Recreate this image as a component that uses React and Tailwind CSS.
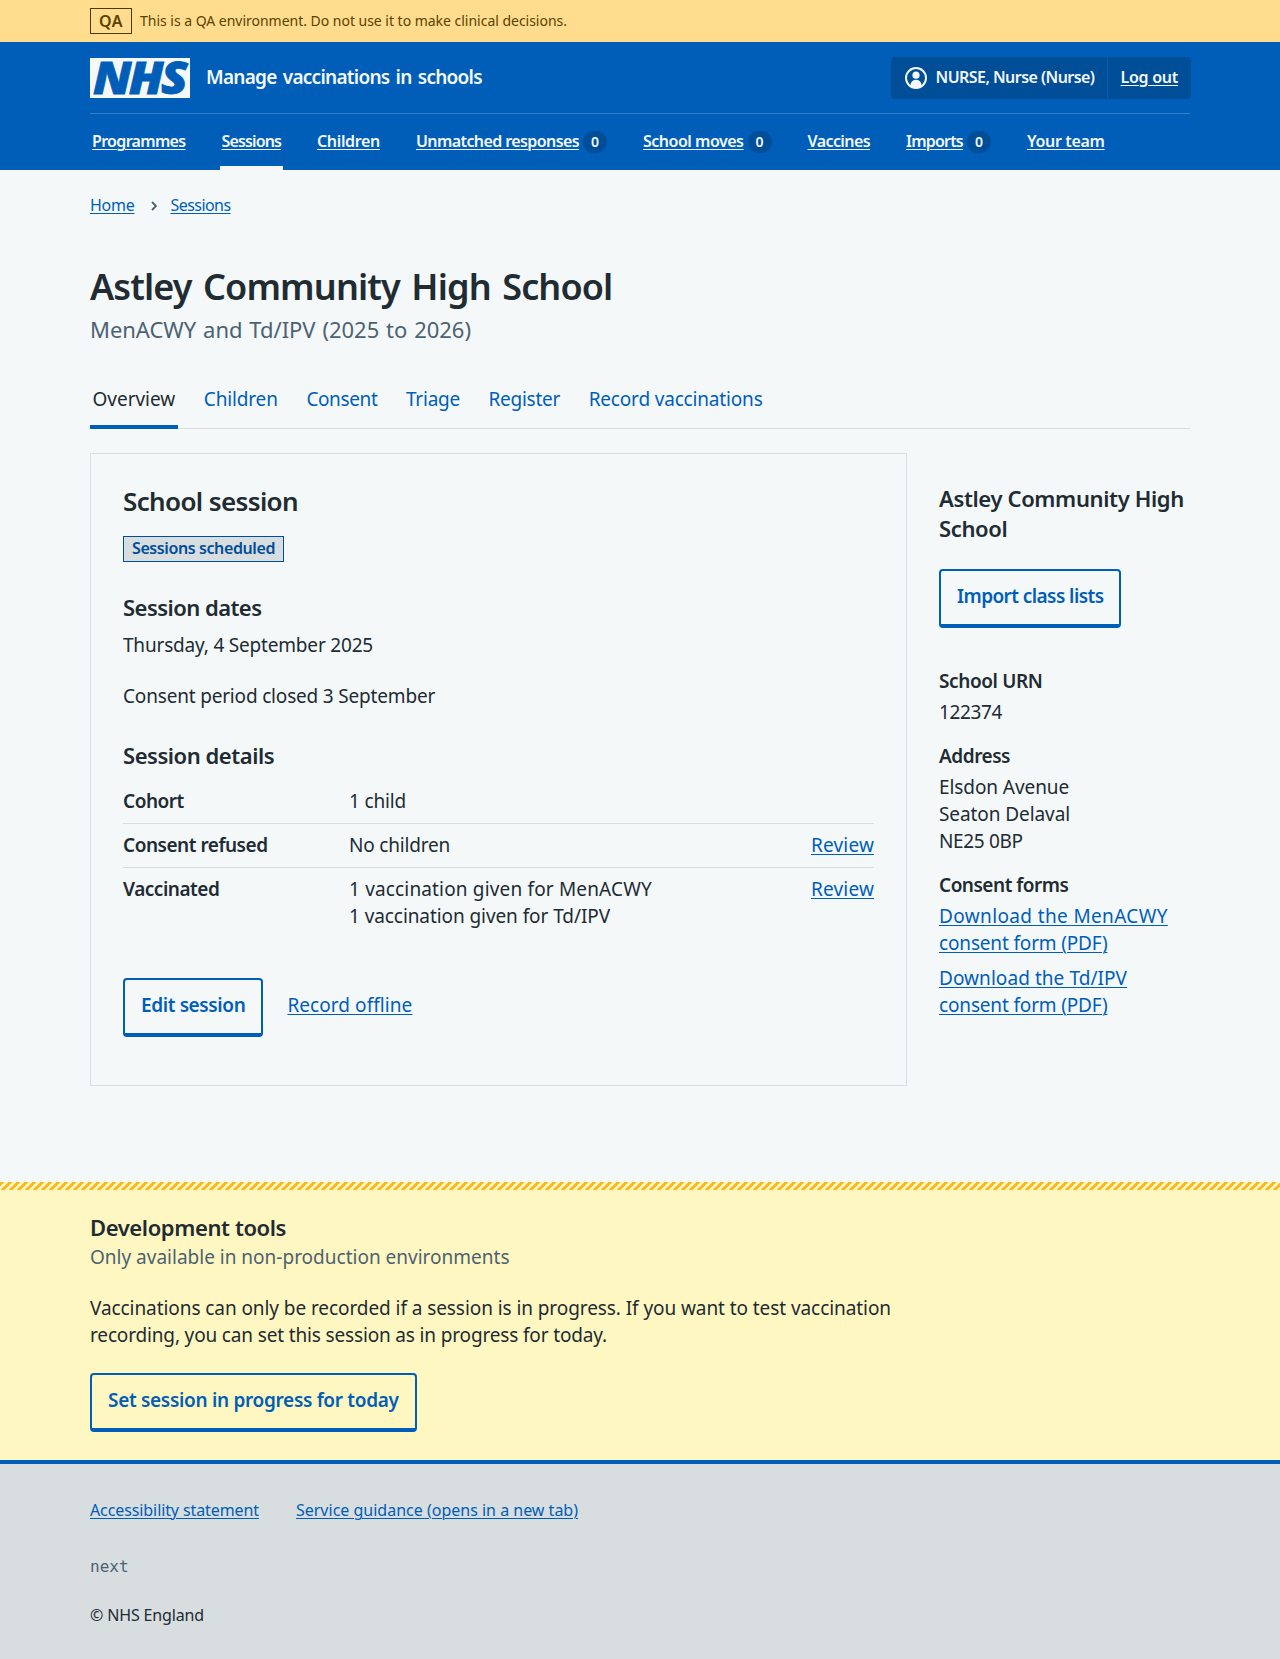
const navItems = [
  { label: "Programmes", fit: "tracking-[-0.68px]" },
  { label: "Sessions", fit: "tracking-[-0.87px]", current: true },
  { label: "Children", fit: "tracking-[-0.34px]" },
  { label: "Unmatched responses", fit: "tracking-[-0.59px]", count: 0 },
  { label: "School moves", fit: "tracking-[-0.49px]", count: 0 },
  { label: "Vaccines", fit: "tracking-[-0.59px]" },
  { label: "Imports", fit: "tracking-[-0.79px]", count: 0 },
  { label: "Your team", fit: "tracking-[-0.34px]" },
];

const tabs = [
  { label: "Overview", fit: "tracking-[-0.02px]", current: true },
  { label: "Children", fit: "tracking-[-0.15px]" },
  { label: "Consent", fit: "tracking-[-0.38px]" },
  { label: "Triage", fit: "tracking-[-0.24px]" },
  { label: "Register", fit: "tracking-[-0.27px]" },
  { label: "Record vaccinations", fit: "tracking-[-0.17px]" },
];

const link = "text-[#005eb8] underline decoration-1 underline-offset-2";

function Container({ className = "", children }) {
  return <div className={`mx-auto w-[1100px] ${className}`}>{children}</div>;
}

function NhsLogo() {
  return (
    <svg
      width="100"
      height="40"
      viewBox="0 0 100 40"
      className="block shrink-0 overflow-visible"
      aria-label="NHS"
    >
      <rect width="100" height="40" fill="#f4f8f9" />
      <text
        x="3"
        y="36"
        textLength="92"
        lengthAdjust="spacingAndGlyphs"
        letterSpacing="-2.5"
        fontFamily="Open Sans"
        fontWeight="800"
        fontStyle="italic"
        fontSize="45"
        fill="#005eb8"
        stroke="#005eb8"
        strokeWidth="0.8"
      >
        NHS
      </text>
    </svg>
  );
}

function UserIcon() {
  return (
    <svg width="22" height="22" viewBox="0 0 22 22" className="block shrink-0">
      <circle cx="11" cy="11" r="10" fill="none" stroke="#f4f8f9" strokeWidth="2" />
      <circle cx="11" cy="8.2" r="3.6" fill="#f4f8f9" />
      <path d="M5.6 19V17.6a5.4 4.9 0 0 1 10.8 0V19a9.6 9.6 0 0 1-10.8 0z" fill="#f4f8f9" />
    </svg>
  );
}

function Button({ className = "", children }) {
  return (
    <button
      type="button"
      className={`flex h-[59px] items-start rounded-[4px] border-2 border-b-4 border-[#005eb8] px-4 pt-3 text-[19px] leading-[27px] font-semibold whitespace-nowrap text-[#005eb8] ${className}`}
    >
      {children}
    </button>
  );
}

function Row({ label, action, last, children }) {
  return (
    <div className={`flex pt-2 ${last ? "" : "border-b border-[#d8dde0] pb-2"}`}>
      <dt className="w-[226px] shrink-0 font-semibold tracking-[-0.48px]">{label}</dt>
      <dd className="grow tracking-[-0.18px]">{children}</dd>
      {action && (
        <dd>
          <a className={`${link} tracking-[0.17px]`}>{action}</a>
        </dd>
      )}
    </div>
  );
}

export default function App() {
  return (
    <div className="min-h-[1659px] bg-[#f4f8f9] font-['Noto_Sans','Open_Sans',sans-serif] text-[19px] leading-[27px] text-[#212b32]">
      <div className="bg-[#ffdc8e] text-[#594300]">
        <Container className="flex h-[42px] items-center gap-2">
          <strong className="flex h-[26px] w-[42px] items-center justify-center border border-[#4d3a00] text-base leading-none font-semibold tracking-[0.4px]">
            QA
          </strong>
          <span className="text-sm tracking-[-0.02px]">
            This is a QA environment. Do not use it to make clinical decisions.
          </span>
        </Container>
      </div>

      <header className="bg-[#005eb8] text-[#f4f8f9]">
        <Container>
          <div className="flex h-[72px] items-center border-b border-[#337ec6] pt-px">
            <NhsLogo />
            <span className="ml-4 pb-px font-semibold tracking-[-0.74px] [word-spacing:2px]">
              Manage vaccinations in schools
            </span>
            <div className="-mr-px ml-auto flex h-[42px] items-stretch rounded-[4px] bg-[#004e98] text-base leading-6 font-semibold">
              <div className="flex items-center gap-[9px] pr-3 pl-[14px]">
                <UserIcon />
                <span className="pb-0.5 tracking-[-0.55px]">NURSE, Nurse (Nurse)</span>
              </div>
              <div className="flex items-center border-l border-[#005eb8] px-[13px] pb-0.5">
                <a className="tracking-[-0.27px] underline decoration-1 underline-offset-2">Log out</a>
              </div>
            </div>
          </div>
          <nav className="flex h-14 gap-8 text-base leading-6 font-semibold">
            {navItems.map((item) => (
              <div
                key={item.label}
                className={`flex items-center gap-1 border-b-4 px-0.5 pt-[2px] ${
                  item.current ? "border-[#f4f8f9]" : "border-transparent"
                }`}
              >
                <a className={`underline decoration-1 underline-offset-2 ${item.fit}`}>{item.label}</a>
                {item.count !== undefined && (
                  <span className="mt-0.5 flex h-[22px] w-6 items-center justify-center rounded-full bg-[#004e98] text-sm leading-none">
                    {item.count}
                  </span>
                )}
              </div>
            ))}
          </nav>
        </Container>
      </header>

      <Container>
        <div className="flex items-center pt-[23px] text-base leading-6">
          <a className={`${link} tracking-[-0.26px]`}>Home</a>
          <svg width="6" height="10" viewBox="0 0 6 10" className="mt-px mr-[13px] ml-[17px]">
            <path d="M1 1l4 4-4 4" fill="none" stroke="#4c6272" strokeWidth="1.8" />
          </svg>
          <a className={`${link} tracking-[-0.56px]`}>Sessions</a>
        </div>

        <h1 className="mt-12 text-4xl leading-[44px] font-semibold tracking-[-0.88px] [word-spacing:3px]">
          Astley Community High School
        </h1>
        <p className="mt-[5px] text-[22px] leading-[30px] tracking-[-0.03px] text-[#4c6272] [word-spacing:1.2px]">
          MenACWY and Td/IPV (2025 to 2026)
        </p>

        <nav className="mt-[41px] flex gap-[23.6px] shadow-[inset_0_-1px_0_#d8dde0]">
          {tabs.map((tab) => (
            <a
              key={tab.label}
              className={`h-11 border-b-4 px-[2.5px] pt-px ${tab.fit} ${
                tab.current ? "border-[#005eb8]" : "border-transparent text-[#005eb8]"
              }`}
            >
              {tab.label}
            </a>
          ))}
        </nav>

        <div className="mt-6 flex gap-8">
          <main className="h-[633px] w-[817px] shrink-0 border border-[#d8dde0] px-8 pt-[31px]">
            <h2 className="text-[26px] leading-8 font-semibold tracking-[-0.63px]">School session</h2>
            <div className="mt-[19px] flex">
              <strong className="flex h-[26px] items-center border border-[#004e98] bg-[#d8dde0] px-2 pb-0.5 text-base leading-none font-semibold tracking-[-0.4px] text-[#004e98]">
                Sessions scheduled
              </strong>
            </div>

            <h3 className="mt-[30px] text-[22px] leading-[30px] font-semibold tracking-[-0.54px]">
              Session dates
            </h3>
            <p className="mt-[10px] tracking-[-0.19px]">Thursday, 4 September 2025</p>
            <p className="mt-6 tracking-[-0.18px]">Consent period closed 3 September</p>

            <h3 className="mt-[30px] text-[22px] leading-[30px] font-semibold tracking-[-0.46px]">
              Session details
            </h3>
            <dl className="mt-[10px]">
              <Row label="Cohort">1 child</Row>
              <Row label="Consent refused" action="Review">
                No children
              </Row>
              <Row label="Vaccinated" action="Review" last>
                <p className="tracking-[0.16px]">1 vaccination given for MenACWY</p>
                <p className="tracking-[-0.08px]">1 vaccination given for Td/IPV</p>
              </Row>
            </dl>

            <div className="mt-12 flex items-start gap-6">
              <Button className="tracking-[-0.38px]">Edit session</Button>
              <a className={`${link} mt-[14px] tracking-[0.066px]`}>Record offline</a>
            </div>
          </main>

          <aside className="grow pt-[30px]">
            <h2 className="text-[22px] leading-[30px] font-semibold tracking-[-0.36px]">
              Astley Community High
              <br />
              School
            </h2>
            <div className="mt-[26px] flex">
              <Button className="tracking-[-0.57px]">Import class lists</Button>
            </div>
            <h3 className="mt-10 font-semibold tracking-[-0.39px]">School URN</h3>
            <p className="mt-1 tracking-[-0.37px]">122374</p>
            <h3 className="mt-[17px] font-semibold tracking-[-0.47px]">Address</h3>
            <p className="mt-1 tracking-[-0.08px]">
              Elsdon Avenue
              <br />
              Seaton Delaval
              <br />
              <span className="tracking-[-0.36px]">NE25 0BP</span>
            </p>
            <h3 className="mt-[17px] font-semibold tracking-[-0.49px]">Consent forms</h3>
            <p className="mt-1 tracking-[-0.16px]">
              <a className={link}>
                <span className="tracking-[0.37px]">Download the MenACWY</span>
                <br />
                consent form (PDF)
              </a>
            </p>
            <p className="mt-2 tracking-[-0.16px]">
              <a className={link}>
                <span className="tracking-[0.06px]">Download the Td/IPV</span>
                <br />
                consent form (PDF)
              </a>
            </p>
          </aside>
        </div>
      </Container>

      <section className="mt-24 bg-[#fff7c2]">
        <div className="h-2 bg-[linear-gradient(-45deg,transparent_25%,#ffb81c_25%,#ffb81c_50%,transparent_50%,transparent_75%,#ffb81c_75%)] bg-[length:8px_8px]" />
        <Container className="flex h-[270px] flex-col items-start pt-[22px]">
          <h2 className="text-[22px] leading-[30px] font-semibold tracking-[-0.4px]">Development tools</h2>
          <p className="mt-0.5 text-[#4c6272]">Only available in non-production environments</p>
          <p className="mt-6">
            <span className="tracking-[-0.075px]">
              Vaccinations can only be recorded if a session is in progress. If you want to test vaccination
            </span>
            <br />
            <span className="tracking-[-0.154px]">
              recording, you can set this session as in progress for today.
            </span>
          </p>
          <Button className="mt-6 tracking-[-0.31px]">Set session in progress for today</Button>
        </Container>
      </section>

      <footer className="h-[199px] border-t-4 border-[#005eb8] bg-[#d8dde0] pt-[34px] text-base leading-6">
        <Container>
          <div className="flex gap-[37px]">
            <a className={`${link} tracking-[-0.1px]`}>Accessibility statement</a>
            <a className={link}>Service guidance (opens in a new tab)</a>
          </div>
          <p className="mt-[33px] h-6 font-['DejaVu_Sans_Mono',monospace] text-[#4c6272]">next</p>
          <p className="mt-6 tracking-[-0.14px]">© NHS England</p>
        </Container>
      </footer>
    </div>
  );
}
